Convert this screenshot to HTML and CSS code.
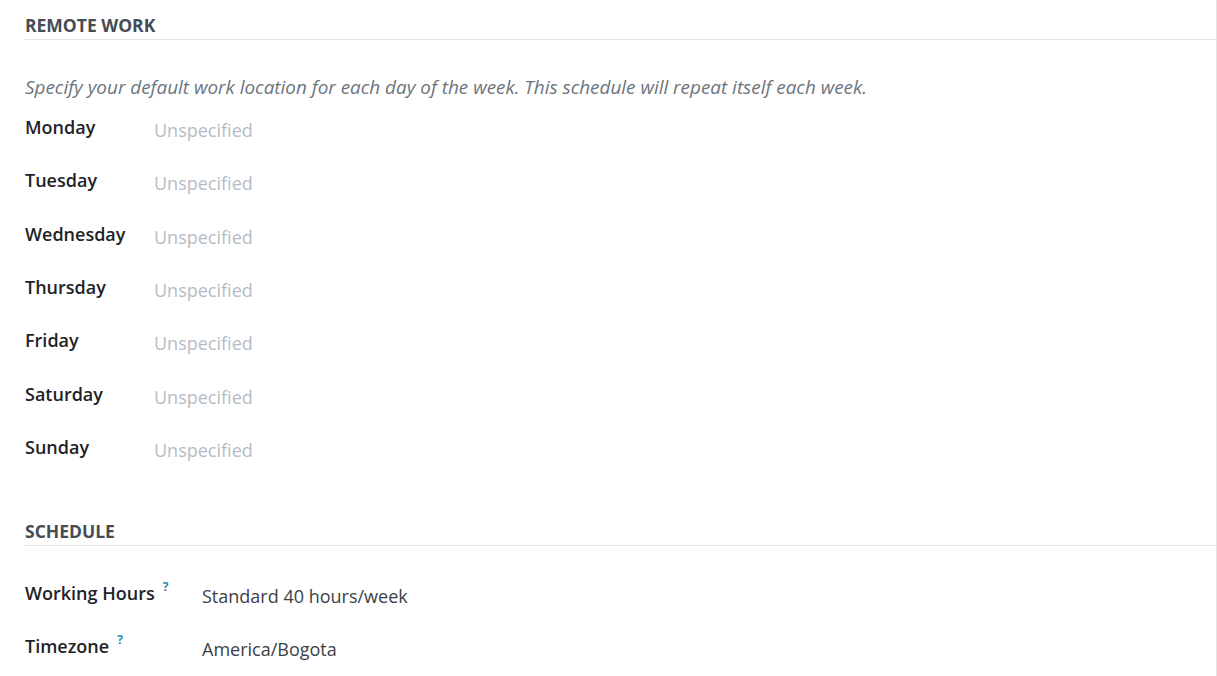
FILE: index.html
```html
<!DOCTYPE html>
<html>
<head>
<meta charset="utf-8">
<link rel="stylesheet" href="styles.css">
</head>
<body>
<div class="page">
  <section class="group">
    <h2 class="group-title">REMOTE WORK</h2>
    <p class="hint">Specify your default work location for each day of the week. This schedule will repeat itself each week.</p>
    <div class="rows days">
      <div class="row"><span class="label">Monday</span><span class="value muted">Unspecified</span></div>
      <div class="row"><span class="label">Tuesday</span><span class="value muted">Unspecified</span></div>
      <div class="row"><span class="label">Wednesday</span><span class="value muted">Unspecified</span></div>
      <div class="row"><span class="label">Thursday</span><span class="value muted">Unspecified</span></div>
      <div class="row"><span class="label">Friday</span><span class="value muted">Unspecified</span></div>
      <div class="row"><span class="label">Saturday</span><span class="value muted">Unspecified</span></div>
      <div class="row"><span class="label">Sunday</span><span class="value muted">Unspecified</span></div>
    </div>
  </section>
  <section class="group schedule">
    <h2 class="group-title">SCHEDULE</h2>
    <div class="rows sched">
      <div class="row"><span class="label">Working Hours<sup class="help">?</sup></span><span class="value">Standard 40 hours/week</span></div>
      <div class="row"><span class="label">Timezone<sup class="help">?</sup></span><span class="value">America/Bogota</span></div>
    </div>
  </section>
</div>
</body>
</html>
```
FILE: styles.css
```css
html, body {
  margin: 0;
  padding: 0;
  background: #ffffff;
}
body {
  font-family: "Open Sans", "Noto Sans", sans-serif;
  font-size: 18px;
  color: #212529;
}
.page {
  width: 1217px;
  height: 676px;
  padding-left: 25px;
  box-sizing: border-box;
  overflow: hidden;
  border-right: 1px solid #e4e4e4;
}
.group-title {
  margin: 0;
  font-size: 17.5px;
  font-weight: 700;
  color: #454c55;
  line-height: 24px;
  padding-top: 13px;
  padding-bottom: 2px;
  border-bottom: 1px solid #e3e3e3;
}
.hint {
  margin: 35px 0 0 0;
  font-style: italic;
  color: #6c757d;
  font-size: 18.9px;
  line-height: 24px;
}
.rows {
  display: flex;
  flex-direction: column;
}
.row {
  display: flex;
  align-items: flex-start;
  height: 53.33px;
}
.label {
  font-weight: 600;
  color: #1f2327;
  line-height: 24px;
}
.value {
  line-height: 24px;
  padding-top: 3px;
  color: #3b4148;
}
.days { margin-top: 16px; }
.days .label { width: 129px; }
.value.muted { color: #b6bcc4; }
.schedule .group-title { padding-top: 0; }
.schedule { margin-top: 31px; }
.sched { margin-top: 35px; }
.sched .row { height: 53px; }
.sched .label { width: 177px; }
.help {
  color: #1f8eb3;
  font-size: 12px;
  font-weight: 700;
  margin-left: 8px;
  vertical-align: top;
  position: relative;
  top: -6px;
}
```
